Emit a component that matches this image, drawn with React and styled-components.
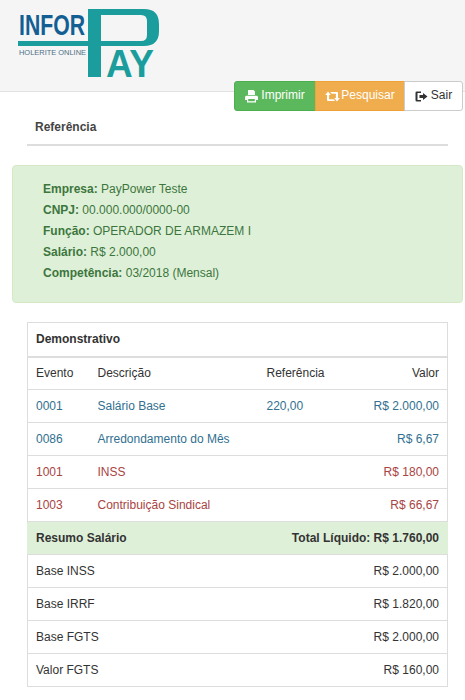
import React from 'react';
import styled, { createGlobalStyle } from 'styled-components';

const eventos = [
  { codigo: '0001', descricao: 'Salário Base', referencia: '220,00', valor: 'R$ 2.000,00', tipo: 'provento' },
  { codigo: '0086', descricao: 'Arredondamento do Mês', referencia: '', valor: 'R$ 6,67', tipo: 'provento' },
  { codigo: '1001', descricao: 'INSS', referencia: '', valor: 'R$ 180,00', tipo: 'desconto' },
  { codigo: '1003', descricao: 'Contribuição Sindical', referencia: '', valor: 'R$ 66,67', tipo: 'desconto' },
];

const bases = [
  { nome: 'Base INSS', valor: 'R$ 2.000,00' },
  { nome: 'Base IRRF', valor: 'R$ 1.820,00' },
  { nome: 'Base FGTS', valor: 'R$ 2.000,00' },
  { nome: 'Valor FGTS', valor: 'R$ 160,00' },
];

const dados = [
  ['Empresa:', 'PayPower Teste'],
  ['CNPJ:', '00.000.000/0000-00'],
  ['Função:', 'OPERADOR DE ARMAZEM I'],
  ['Salário:', 'R$ 2.000,00'],
  ['Competência:', '03/2018 (Mensal)'],
];

const Logo = () => (
  <svg width="150" height="84" viewBox="0 0 150 84">
    <text x="1" y="30" fontFamily="Liberation Sans" fontWeight="700" fontSize="29" fill="#135f94" textLength="66" lengthAdjust="spacingAndGlyphs">INFOR</text>
    <text x="1" y="50" fontFamily="Liberation Sans" fontSize="8" fill="#4d6f86" textLength="67" lengthAdjust="spacingAndGlyphs">HOLERITE ONLINE</text>
    <rect x="0" y="36" width="72" height="5" fill="#1c9d9d" />
    <path fillRule="evenodd" d="M70 4H126Q141 4 141 19V26Q141 41 126 41H83V72H70ZM83 10V36H123Q129 36 129 30V16Q129 10 123 10Z" fill="#1c9d9d" />
    <text x="88" y="72" fontFamily="Liberation Sans" fontWeight="700" fontSize="39" fill="#1c9d9d" textLength="48" lengthAdjust="spacingAndGlyphs">AY</text>
  </svg>
);

const PrintIcon = () => (
  <svg width="13" height="13" viewBox="0 0 13 13" fill="currentColor">
    <path fillRule="evenodd" d="M3 0H8.500L10 1.500V5H3ZM1.500 5.800H11.500Q13 5.800 13 7.300V10H11V12.500H2V10H0V7.300Q0 5.800 1.500 5.800ZM3.200 9V11.300H9.800V9Z" />
  </svg>
);

const RetweetIcon = () => (
  <svg width="15" height="13" viewBox="0 0 15 13" fill="currentColor">
    <path d="M3 1.500L5.800 5H4.100V9.200H8.500L10.200 11H3Q2 11 2 10V5H.2ZM5.200 2H12Q13 2 13 3V8H14.800L12 11.500L9.200 8H10.900V3.800H6.900Z" />
  </svg>
);

const LogoutIcon = () => (
  <svg width="13" height="13" viewBox="0 0 13 13" fill="currentColor">
    <path d="M1.800 1.500H6V3H2.500V10H6V11.500H1.800Q.5 11.500 .5 10.200V2.800Q.5 1.500 1.800 1.500ZM8 3L12.500 6.500L8 10V8H4.500V5H8Z" />
  </svg>
);

const App = () => (
  <>
    <GlobalStyle />
    <Header>
      <Logo />
    </Header>
    <Toolbar>
      <ActionButton $variant="success" $width="82px"><PrintIcon />Imprimir</ActionButton>
      <ActionButton $variant="warning" $width="90px" $gap="1px"><RetweetIcon />Pesquisar</ActionButton>
      <ActionButton $width="59px"><LogoutIcon />Sair</ActionButton>
    </Toolbar>
    <Tabs>
      <Tab>Referência</Tab>
    </Tabs>
    <Alert>
      {dados.map(([rotulo, valor]) => (
        <AlertLine key={rotulo}><strong>{rotulo}</strong> {valor}</AlertLine>
      ))}
    </Alert>
    <TableWrapper>
      <Table>
        <colgroup>
          <col width="62" />
          <col width="169" />
          <col width="98" />
          <col />
        </colgroup>
        <thead>
          <tr><TitleCell colSpan="4">Demonstrativo</TitleCell></tr>
          <tr>
            <HeadCell>Evento</HeadCell>
            <HeadCell>Descrição</HeadCell>
            <HeadCell>Referência</HeadCell>
            <HeadCell $right>Valor</HeadCell>
          </tr>
        </thead>
        <tbody>
          {eventos.map((e) => (
            <tr key={e.codigo}>
              <Cell $tipo={e.tipo}>{e.codigo}</Cell>
              <Cell $tipo={e.tipo}>{e.descricao}</Cell>
              <Cell $tipo={e.tipo}>{e.referencia}</Cell>
              <Cell $tipo={e.tipo} $right>{e.valor}</Cell>
            </tr>
          ))}
          <tr>
            <SummaryCell colSpan="2">Resumo Salário</SummaryCell>
            <SummaryCell colSpan="2" $right>Total Líquido: R$ 1.760,00</SummaryCell>
          </tr>
          {bases.map((b) => (
            <tr key={b.nome}>
              <Cell colSpan="2">{b.nome}</Cell>
              <Cell colSpan="2" $right>{b.valor}</Cell>
            </tr>
          ))}
        </tbody>
      </Table>
    </TableWrapper>
  </>
);

const GlobalStyle = createGlobalStyle`
  * {
    box-sizing: border-box;
  }

  body {
    margin: 0;
    background: #fff;
    color: #333;
    font-family: "Liberation Sans", Arial, sans-serif;
    font-size: 12px;
    line-height: 1.42857;
  }
`;

const Header = styled.header`
  height: 92px;
  padding: 5px 0 0 18px;
  overflow: hidden;
  background: #f5f5f5;
  border-bottom: 1px solid #e2e2e2;
`;

const Toolbar = styled.div`
  display: flex;
  justify-content: flex-end;
  margin-top: -11px;
  padding-right: 2px;
`;

const ActionButton = styled.button`
  display: flex;
  align-items: center;
  justify-content: center;
  gap: ${(p) => p.$gap || '3px'};
  width: ${(p) => p.$width};
  height: 30px;
  padding: 0;
  border: 1px solid ${(p) => (p.$variant === 'success' ? '#4cae4c' : p.$variant === 'warning' ? '#eea236' : '#ccc')};
  background: ${(p) => (p.$variant === 'success' ? '#5cb85c' : p.$variant === 'warning' ? '#f0ad4e' : '#fff')};
  color: ${(p) => (p.$variant ? '#fff' : '#333')};
  font: inherit;
  margin-left: -1px;

  &:first-child {
    border-radius: 3px 0 0 3px;
  }

  &:last-child {
    border-radius: 0 3px 3px 0;
  }
`;

const Tabs = styled.nav`
  margin: 0 17px 0 27px;
  border-bottom: 2px solid #ddd;
`;

const Tab = styled.div`
  padding: 5px 8px 5px;
  font-weight: 700;
  line-height: 23px;
  color: #444;
`;

const Alert = styled.section`
  margin: 19px 2px 19px 12px;
  padding: 13px 30px 18px;
  background: #dff0d8;
  border: 1px solid #d6e9c6;
  border-radius: 4px;
  color: #3c763d;
`;

const AlertLine = styled.div`
  line-height: 21px;
`;

const TableWrapper = styled.div`
  margin: 0 17px 0 27px;
`;

const Table = styled.table`
  width: 100%;
  border-collapse: collapse;
  table-layout: fixed;
`;

const TitleCell = styled.th`
  height: 34px;
  padding: 0 8px;
  border: 1px solid #ddd;
  border-bottom: 2px solid #ddd;
  text-align: left;
  font-weight: 700;
`;

const HeadCell = styled.th`
  height: 33px;
  padding: 0 8px;
  border-top: 1px solid #ddd;
  border-bottom: 1px solid #ddd;
  text-align: ${(p) => (p.$right ? 'right' : 'left')};
  font-weight: 400;

  &:first-child {
    border-left: 1px solid #ddd;
  }

  &:last-child {
    border-right: 1px solid #ddd;
  }
`;

const Cell = styled.td`
  height: 33px;
  padding: 1px 8px 0;
  border-bottom: 1px solid #ddd;
  text-align: ${(p) => (p.$right ? 'right' : 'left')};
  color: ${(p) => (p.$tipo === 'provento' ? '#31708f' : p.$tipo === 'desconto' ? '#a94442' : '#333')};

  &:first-child {
    border-left: 1px solid #ddd;
  }

  &:last-child {
    border-right: 1px solid #ddd;
  }
`;

const SummaryCell = styled.td`
  height: 33px;
  padding: 1px 8px 0;
  background: #dff0d8;
  border-bottom: 1px solid #ddd;
  border-left: 1px solid #dff0d8;
  border-right: 1px solid #dff0d8;
  text-align: ${(p) => (p.$right ? 'right' : 'left')};
  font-weight: 700;
`;

export default App;
